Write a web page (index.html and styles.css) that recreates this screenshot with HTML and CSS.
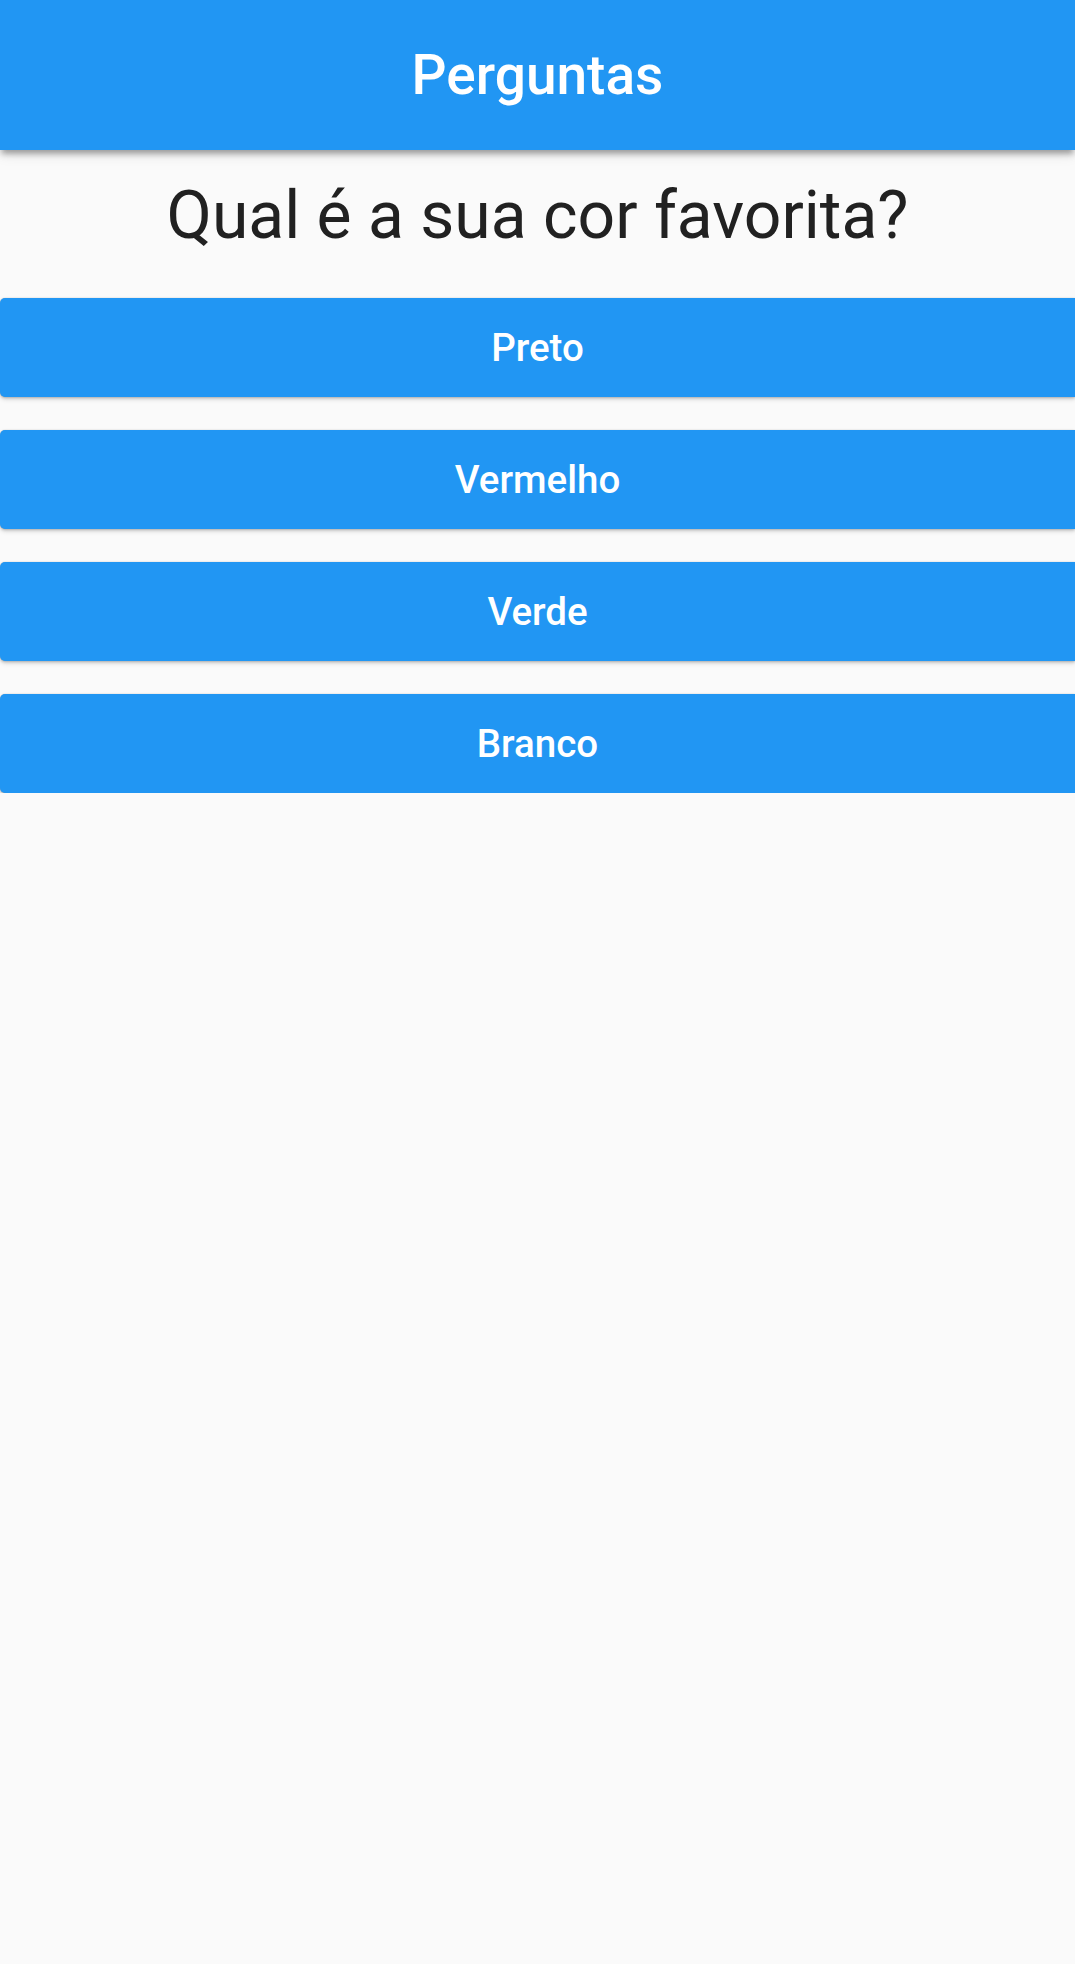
FILE: index.html
```html
<!DOCTYPE html>
<html lang="pt">
<head>
<meta charset="utf-8">
<title>Perguntas</title>
<link rel="stylesheet" href="styles.css">
</head>
<body>
<header class="app-bar">
  <h1 class="app-title">Perguntas</h1>
</header>
<main class="content">
  <div class="question">Qual é a sua cor favorita?</div>
  <div class="answers">
    <button class="answer">Preto</button>
    <button class="answer">Vermelho</button>
    <button class="answer">Verde</button>
    <button class="answer">Branco</button>
  </div>
</main>
</body>
</html>
```

FILE: styles.css
```css
html, body {
  margin: 0;
  padding: 0;
  background: #fafafa;
  font-family: Roboto, "Noto Sans", "Liberation Sans", sans-serif;
  overflow-x: hidden;
}

.app-bar {
  position: relative;
  z-index: 2;
  height: 150px;
  background: #2196f3;
  display: flex;
  align-items: center;
  justify-content: center;
  box-shadow: 0 5px 6px rgba(0, 0, 0, 0.14), 0 3px 14px rgba(0, 0, 0, 0.12), 0 6px 5px -3px rgba(0, 0, 0, 0.2);
}

.app-title {
  margin: 0;
  font-size: 55px;
  font-weight: 500;
  line-height: 150px;
  color: #ffffff;
}

.content {
  display: flex;
  flex-direction: column;
}

.question {
  padding-top: 26px;
  font-size: 66px;
  font-weight: 400;
  line-height: 79px;
  color: #212121;
  text-align: center;
}

.answers {
  display: flex;
  flex-direction: column;
  gap: 33px;
  padding-top: 43px;
}

.answer {
  display: block;
  width: 100%;
  height: 99px;
  margin: 0;
  padding: 0;
  border: none;
  border-radius: 5px 0 0 5px;
  background: #2196f3;
  color: #ffffff;
  font-family: Roboto, "Noto Sans", "Liberation Sans", sans-serif;
  font-size: 38.5px;
  font-weight: 500;
  line-height: 99px;
  text-align: center;
  box-shadow: 0 0 1px rgba(0, 0, 0, 0.2), 0 1px 3px rgba(0, 0, 0, 0.22), 0 3px 4px rgba(0, 0, 0, 0.1);
}
```
